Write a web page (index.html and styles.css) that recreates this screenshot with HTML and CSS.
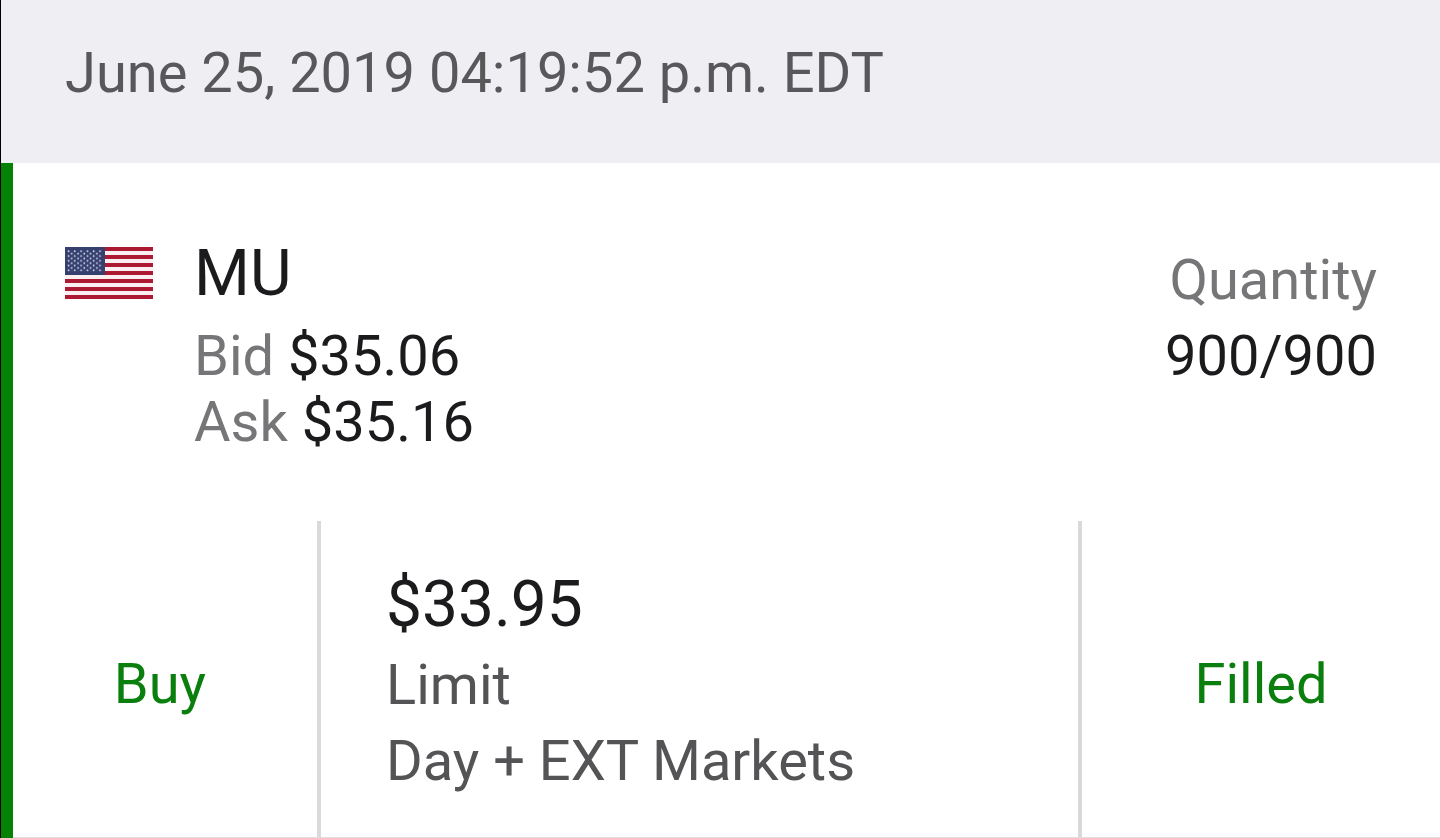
FILE: index.html
```html
<!DOCTYPE html>
<html lang="en">
<head>
<meta charset="utf-8">
<title>Order status</title>
<link rel="stylesheet" href="styles.css">
</head>
<body>
<main class="orders">
  <header class="date-bar"><time datetime="2019-06-25T16:19:52-04:00">June 25, 2019 04:19:52 p.m. EDT</time></header>
  <article class="order">
    <section class="summary">
      <svg class="flag" viewBox="0 0 88 52" role="img" aria-label="United States">
        <defs>
          <pattern id="stars" x="2" y="3" width="6.3" height="4.8" patternUnits="userSpaceOnUse">
            <circle cx="1.5" cy="1.2" r="0.85" fill="#dfe3f0"/>
            <circle cx="4.7" cy="3.6" r="0.85" fill="#dfe3f0"/>
          </pattern>
        </defs>
        <rect width="88" height="52" fill="#fbeff2"/>
        <path d="M0 2H88M0 10H88M0 18H88M0 26H88M0 34H88M0 42H88M0 50H88" stroke="#ab1933" stroke-width="4"/>
        <rect width="40" height="28" fill="#35406f"/>
        <rect x="2" y="3" width="35" height="21.6" fill="url(#stars)"/>
      </svg>
      <div class="quote">
        <h1 class="symbol">MU</h1>
        <p class="line"><span class="label">Bid</span> $35.06</p>
        <p class="line"><span class="label">Ask</span> $35.16</p>
      </div>
      <div class="quantity">
        <p class="quantity-label">Quantity</p>
        <p class="quantity-value">900/900</p>
      </div>
    </section>
    <section class="details">
      <div class="side">Buy</div>
      <div class="terms">
        <p class="price">$33.95</p>
        <p class="term">Limit</p>
        <p class="term">Day + EXT Markets</p>
      </div>
      <div class="status">Filled</div>
    </section>
  </article>
</main>
</body>
</html>
```
FILE: styles.css
```css
* { box-sizing: border-box; }
body {
  margin: 0;
  background: #fff;
  color: #1b1b1d;
  font: 56px/66px Roboto, sans-serif;
}
p, h1 { margin: 0; font-weight: 400; }
.orders {
  display: flex;
  flex-direction: column;
  min-height: 100vh;
  border-left: 1px solid #000;
}
.date-bar {
  padding: 40px 64px 57px;
  background: #efeef3;
  color: #58585a;
}
.order {
  flex: 1;
  display: flex;
  flex-direction: column;
  border-left: 12px solid #058205;
}
.summary {
  display: flex;
  padding: 76px 63px 66px 52px;
}
.flag { width: 88px; height: 52px; margin: 8px 41px 0 0; }
.quote { flex: 1; }
.symbol { font-size: 64px; line-height: 70px; margin-bottom: 14px; }
.label, .quantity-label { color: #767678; }
.quantity { padding-top: 8px; text-align: right; }
.quantity-label { margin-bottom: 10px; }
.details {
  flex: 1;
  display: grid;
  grid-template-columns: 304px 1fr 358px;
  border-bottom: 1px solid #dedede;
}
.side, .status {
  display: flex;
  align-items: center;
  justify-content: center;
  padding-top: 10px;
  color: #0a7f0e;
}
.side { padding-right: 10px; }
.terms {
  border: solid #d9d9d9;
  border-width: 0 4px;
  padding: 46px 65px 32px;
}
.price { font-size: 64px; line-height: 76px; margin-bottom: 4px; }
.term { line-height: 76px; color: #545456; }
```
